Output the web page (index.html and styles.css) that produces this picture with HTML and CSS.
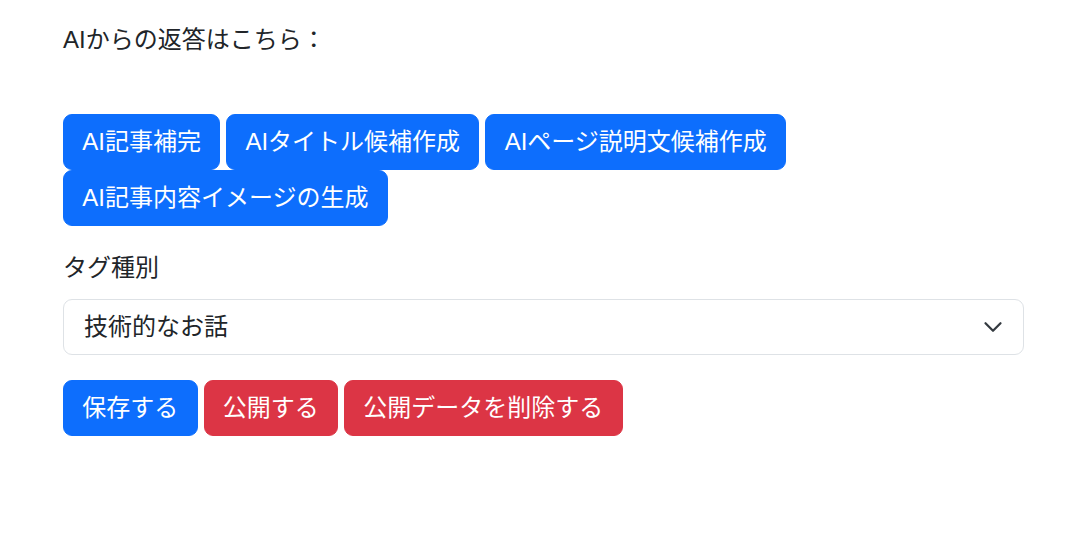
FILE: index.html
```html
<!DOCTYPE html>
<html lang="ja">
<head>
<meta charset="utf-8">
<link rel="stylesheet" href="styles.css">
</head>
<body>
<div class="container">
  <p class="answer">AIからの返答はこちら：</p>
  <div class="btn-group ai-group">
    <button class="btn btn-primary">AI記事補完</button>
    <button class="btn btn-primary">AIタイトル候補作成</button>
    <button class="btn btn-primary">AIページ説明文候補作成</button>
    <button class="btn btn-primary">AI記事内容イメージの生成</button>
  </div>
  <label class="form-label">タグ種別</label>
  <div class="select">
    <span>技術的なお話</span>
    <svg class="chevron" viewBox="0 0 16 16" width="20" height="20"><path d="m2 5 6 6 6-6" fill="none" stroke="#343a40" stroke-width="1.8" stroke-linecap="round" stroke-linejoin="round"/></svg>
  </div>
  <div class="btn-group actions">
    <button class="btn btn-primary">保存する</button>
    <button class="btn btn-danger">公開する</button>
    <button class="btn btn-danger">公開データを削除する</button>
  </div>
</div>
</body>
</html>
```
FILE: styles.css
```css
html, body {
  margin: 0;
  padding: 0;
  background: #fff;
}
body {
  font-family: "Liberation Sans", "Noto Sans CJK JP", sans-serif;
  font-size: 24px;
  line-height: 36px;
  color: #212529;
}
.container {
  padding: 22px 56px 0 63px;
}
.answer {
  margin: 0 0 56px;
}
.btn-group {
  display: flex;
  flex-wrap: wrap;
  column-gap: 6px;
}
.ai-group {
  margin-bottom: 24px;
}
.btn {
  font-family: inherit;
  font-size: 24px;
  line-height: 36px;
  padding: 9px 18.25px;
  border: 1px solid transparent;
  border-radius: 9px;
  color: #fff;
  cursor: pointer;
}
.btn-primary {
  background: #0d6efd;
  border-color: #0d6efd;
}
.btn-danger {
  background: #dc3545;
  border-color: #dc3545;
}
.form-label {
  display: block;
  margin-bottom: 13px;
}
.select {
  display: flex;
  align-items: center;
  justify-content: space-between;
  height: 56px;
  box-sizing: border-box;
  padding: 0 20px 0 20px;
  border: 1px solid #dee2e6;
  border-radius: 9px;
  margin-bottom: 25px;
}
.chevron {
  display: block;
}
```
